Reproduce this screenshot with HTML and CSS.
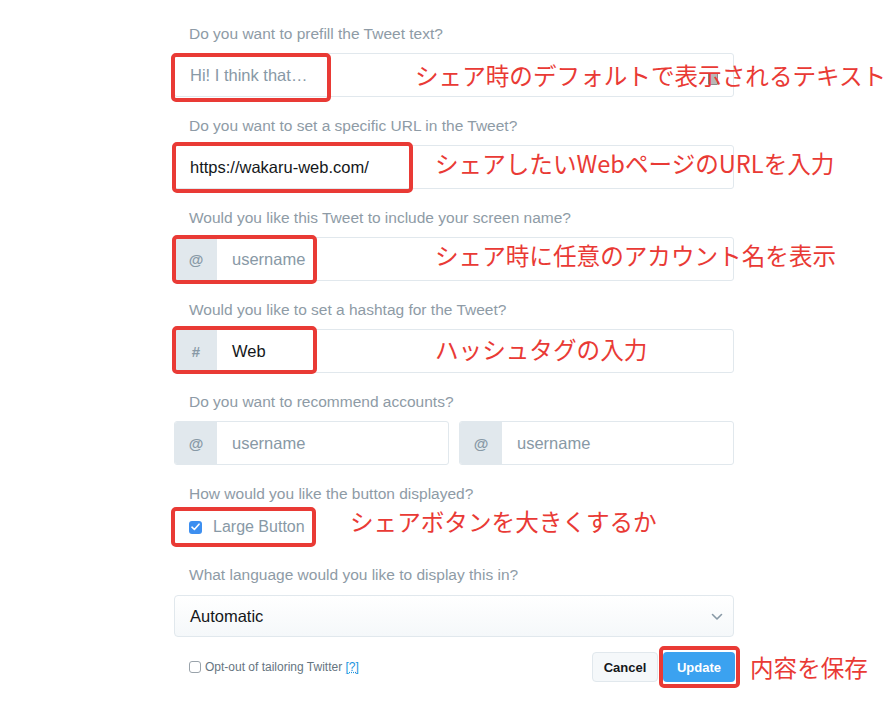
FILE: index.html
```html
<!DOCTYPE html>
<html lang="ja">
<head>
<meta charset="utf-8">
<title>Tweet button settings</title>
<link rel="stylesheet" href="styles.css">
</head>
<body>
<div class="form">
  <div class="field">
    <div class="q">Do you want to prefill the Tweet text?</div>
    <div class="box">
      <div class="input placeholder">Hi! I think that…</div>
      <span class="kbd"></span>
      <span class="mark m1"></span>
      <span class="note n1">シェア時のデフォルトで表示されるテキスト</span>
    </div>
  </div>

  <div class="field">
    <div class="q">Do you want to set a specific URL in the Tweet?</div>
    <div class="box">
      <div class="input value">https://wakaru-web.com/</div>
      <span class="mark m2"></span>
      <span class="note n2">シェアしたいWebページのURLを入力</span>
    </div>
  </div>

  <div class="field">
    <div class="q">Would you like this Tweet to include your screen name?</div>
    <div class="box">
      <span class="addon">@</span>
      <div class="input placeholder">username</div>
      <span class="mark m3"></span>
      <span class="note n3">シェア時に任意のアカウント名を表示</span>
    </div>
  </div>

  <div class="field">
    <div class="q">Would you like to set a hashtag for the Tweet?</div>
    <div class="box">
      <span class="addon">#</span>
      <div class="input value">Web</div>
      <span class="mark m4"></span>
      <span class="note n4">ハッシュタグの入力</span>
    </div>
  </div>

  <div class="field">
    <div class="q">Do you want to recommend accounts?</div>
    <div class="pair">
      <div class="box">
        <span class="addon">@</span>
        <div class="input placeholder">username</div>
      </div>
      <div class="box">
        <span class="addon">@</span>
        <div class="input placeholder">username</div>
      </div>
    </div>
  </div>

  <div class="field">
    <div class="q">How would you like the button displayed?</div>
    <div class="check-row">
      <span class="cb checked"><svg width="9" height="8" viewBox="0 0 9 8"><path d="M1 4.2 L3.4 6.5 L8 1.2" fill="none" stroke="#fff" stroke-width="1.6" stroke-linecap="round" stroke-linejoin="round"/></svg></span>
      <span class="cb-label">Large Button</span>
      <span class="mark m5"></span>
      <span class="note n5">シェアボタンを大きくするか</span>
    </div>
  </div>

  <div class="field lang">
    <div class="q">What language would you like to display this in?</div>
    <div class="select">
      <span>Automatic</span>
      <svg class="chev" width="12" height="8" viewBox="0 0 12 8"><path d="M1.5 1.5 L6 6 L10.5 1.5" fill="none" stroke="#8899a6" stroke-width="1.6" stroke-linecap="round" stroke-linejoin="round"/></svg>
    </div>
  </div>

  <div class="footer">
    <div class="optout">
      <span class="cb plain"></span>
      <span>Opt-out of tailoring Twitter <a class="help">[?]</a></span>
    </div>
    <div class="buttons">
      <span class="btn cancel">Cancel</span>
      <span class="btn update">Update
        <span class="mark m6"></span>
        <span class="note n6">内容を保存</span>
      </span>
    </div>
  </div>
</div>
</body>
</html>
```

FILE: styles.css
```css
html, body {
  margin: 0;
  padding: 0;
  background: #fff;
  overflow: hidden;
}
body {
  width: 888px;
  height: 702px;
  font-family: "Liberation Sans", Arial, sans-serif;
}
.form {
  display: flex;
  flex-direction: column;
  width: 560px;
  margin-left: 174px;
  padding-top: 24px;
}
.field {
  display: flex;
  flex-direction: column;
  margin-bottom: 19px;
}
.q {
  font-size: 15.5px;
  line-height: 20px;
  height: 20px;
  color: #8e9ba6;
  padding-left: 15px;
  margin-bottom: 9px;
  white-space: nowrap;
}
.box {
  position: relative;
  display: flex;
  align-items: stretch;
  height: 44px;
  box-sizing: border-box;
  border: 1px solid #e1e8ed;
  border-radius: 3px;
  background: #fff;
}
.input {
  display: flex;
  align-items: center;
  padding-left: 15px;
  font-size: 16.5px;
  white-space: nowrap;
}
.placeholder { color: #8899a6; }
.value { color: #14171a; }
.addon {
  width: 42px;
  background: #e1e8ed;
  color: #8899a6;
  font-size: 15px;
  font-weight: bold;
  display: flex;
  align-items: center;
  justify-content: center;
  border-radius: 2px 0 0 2px;
}
.kbd {
  position: absolute;
  right: 15px;
  top: 19px;
  width: 8px;
  height: 10px;
  border: 1px solid #8b8b8b;
  background: #b8b8b8;
  border-radius: 1px;
}
.pair {
  display: flex;
  gap: 10px;
}
.pair .box { flex: 1; }

.mark {
  position: absolute;
  box-sizing: border-box;
  border: 4px solid #e93a35;
  border-radius: 5px;
  pointer-events: none;
}
.note {
  position: absolute;
  font-family: "Noto Sans CJK JP", "Noto Sans", sans-serif;
  font-size: 23.6px;
  line-height: 30px;
  color: #e93a35;
  white-space: nowrap;
  font-weight: 400;
}
.m1 { left: -4px; top: -1px; width: 160px; height: 49px; }
.n1 { left: 240px; top: 6px; }
.m2 { left: -3px; top: -4px; width: 241px; height: 51px; }
.n2 { left: 260px; top: 2px; }
.m3 { left: -3px; top: -3px; width: 145px; height: 49px; }
.n3 { left: 260px; top: 2px; }
.m4 { left: -3px; top: -4px; width: 145px; height: 48px; }
.n4 { left: 260px; top: 4px; }

.check-row {
  position: relative;
  display: flex;
  align-items: center;
  height: 24px;
  margin-top: 2px;
  padding-left: 15px;
  margin-bottom: 7px;
}
.cb {
  box-sizing: border-box;
  width: 13px;
  height: 13px;
  border-radius: 3px;
  display: inline-flex;
  align-items: center;
  justify-content: center;
  flex: none;
}
.cb.checked { background: #3d8ff0; }
.cb.plain {
  width: 12px;
  height: 12px;
  border: 1px solid #9aa3ab;
  background: #fff;
}
.cb-label {
  margin-left: 11px;
  font-size: 16px;
  color: #8899a6;
}
.m5 { left: -3px; top: -8px; width: 145px; height: 40px; }
.n5 { left: 176px; top: -9px; }

.lang { margin-bottom: 15px; }
.lang .q { margin-bottom: 10px; }
.select {
  display: flex;
  align-items: center;
  justify-content: space-between;
  height: 42px;
  box-sizing: border-box;
  border: 1px solid #e1e8ed;
  border-radius: 4px;
  background: linear-gradient(#fff, #f5f8fa);
  padding: 0 10px 0 15px;
  font-size: 16.5px;
  color: #14171a;
}
.chev { margin-top: 2px; }

.footer {
  display: flex;
  justify-content: space-between;
  align-items: center;
  height: 30px;
}
.optout {
  display: flex;
  align-items: center;
  gap: 4px;
  padding-left: 15px;
  font-size: 12px;
  color: #66757f;
}
.help {
  color: #1b95e0;
  text-decoration: underline dotted;
}
.buttons {
  display: flex;
  gap: 5px;
  margin-right: -1px;
}
.btn {
  position: relative;
  display: flex;
  align-items: center;
  justify-content: center;
  height: 30px;
  box-sizing: border-box;
  border-radius: 4px;
  font-size: 13px;
  font-weight: bold;
}
.cancel {
  width: 66px;
  background: #f5f8fa;
  border: 1px solid #e1e8ed;
  color: #14171a;
}
.update {
  width: 72px;
  background: #3ba2f0;
  color: #fff;
}
.m6 { left: -4px; top: -6px; width: 81px; height: 42px; }
.n6 { left: 87px; top: 0; font-weight: 400; }
```
